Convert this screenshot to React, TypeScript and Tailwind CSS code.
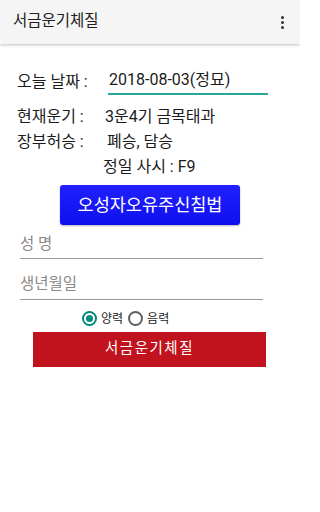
import React from 'react'

// --- Styles ---
const font = { fontFamily: '"Roboto", "Noto Sans CJK KR", sans-serif' }

const infoRows = [
  { label: '현재운기 :', value: '3운4기 금목태과', pad: 'pl-[105px]' },
  { label: '장부허승 :', value: '폐승, 담승', pad: 'pl-[107px]' },
]

function Radio({ checked, label }: { checked?: boolean; label: string }) {
  return (
    <label className="flex items-center gap-[4px]">
      <span
        className={
          checked
            ? 'flex h-[15px] w-[15px] items-center justify-center rounded-full border-2 border-[#00897b]'
            : 'flex h-[15px] w-[15px] items-center justify-center rounded-full border-2 border-[#5f5f5f]'
        }
      >
        {checked && <span className="h-[7px] w-[7px] rounded-full bg-[#00897b]" />}
      </span>
      <span className="text-[12px] text-[#222]">{label}</span>
    </label>
  )
}

export default function App() {
  return (
    <div className="relative h-[512px] w-[300px] overflow-hidden bg-white text-[#1b1b1b]" style={font}>
      {/* App bar */}
      <header className="flex h-[44px] items-center justify-between bg-[#f5f5f5] pl-[13px] pr-[16px] shadow-[0_1px_3px_rgba(0,0,0,0.25)]">
        <h1 className="text-[15.5px] text-[#212121]">서금운기체질</h1>
        <div className="flex flex-col gap-[2px]">
          <span className="h-[3px] w-[3px] rounded-full bg-[#333]" />
          <span className="h-[3px] w-[3px] rounded-full bg-[#333]" />
          <span className="h-[3px] w-[3px] rounded-full bg-[#333]" />
        </div>
      </header>

      {/* Date */}
      <div className="mt-[24px] flex items-center pl-[17px] text-[16px]">
        <span className="w-[91px]">오늘 날짜 :</span>
        <span className="w-[160px] border-b-2 border-[#26a69a] pb-[1px] pl-[1px]">2018-08-03(정묘)</span>
      </div>

      {/* Info */}
      <div className="mt-[10px] flex flex-col gap-[5px] text-[16px]">
        {infoRows.map((row) => (
          <div key={row.label} className="relative h-[20px]">
            <span className="absolute left-[17px] top-0">{row.label}</span>
            <span className={`${row.pad} absolute left-0 top-0`}>{row.value}</span>
          </div>
        ))}
        <div className="h-[20px] pl-[103px]">정일 사시 : F9</div>
      </div>

      {/* Blue button */}
      <div className="mt-[10px] flex justify-center">
        <button className="h-[40px] w-[180px] rounded-[3px] bg-gradient-to-b from-[#2020ff] to-[#0f0fee] text-[17.5px] text-white shadow-[0_1px_2px_rgba(0,0,0,0.3)]">
          오성자오유주신침법
        </button>
      </div>

      {/* Inputs */}
      <div className="mt-[8px] flex flex-col gap-[14px] pl-[20px]">
        <div className="w-[243px] border-b border-[#9a9a9a] pb-[2px] text-[15.5px] text-[#8a8a8a]">성 명</div>
        <div className="w-[243px] border-b border-[#9a9a9a] pb-[2px] text-[15.5px] text-[#8a8a8a]">생년월일</div>
      </div>

      {/* Radio */}
      <div className="mt-[10px] flex items-center gap-[5px] pl-[82px]">
        <Radio checked label="양력" />
        <Radio label="음력" />
      </div>

      {/* Red button */}
      <div className="mt-[4px] flex pl-[33px]">
        <button className="h-[35px] w-[233px] bg-[#c0131e] text-[14.5px] tracking-[1.5px] text-white">
          서금운기체질
        </button>
      </div>
    </div>
  )
}
